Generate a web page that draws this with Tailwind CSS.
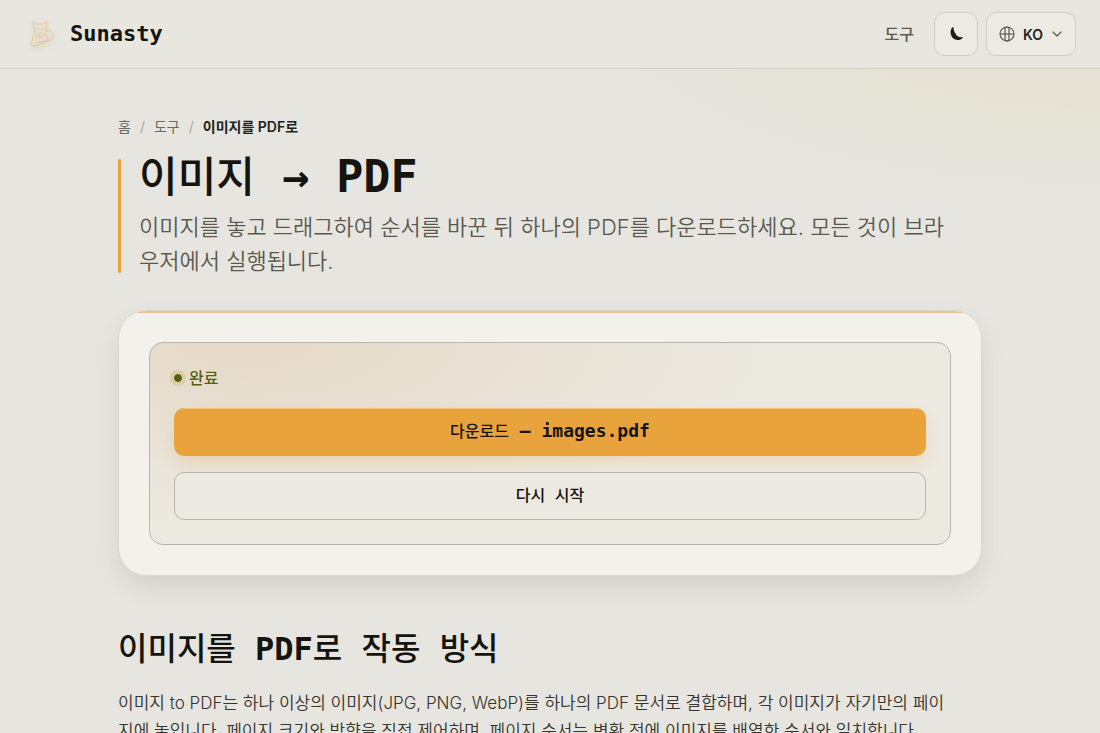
<!DOCTYPE html>
<html lang="ko">
<head>
<meta charset="utf-8">
<meta name="viewport" content="width=device-width, initial-scale=1">
<title>이미지를 PDF로 | Sunasty</title>
<script src="https://cdn.jsdelivr.net/npm/@tailwindcss/browser@4"></script>
</head>
<body class="min-h-screen bg-[#e6e5e0] bg-[radial-gradient(ellipse_560px_210px_at_100%_0,#e6e2d2_0%,#e6e3d6_50%,#e6e5e0_100%)] bg-no-repeat font-['Inter','Noto_Sans_CJK_KR',sans-serif] text-[#15140f]">
<header class="flex h-[69px] items-center justify-between border-b border-[#d0cec5] bg-[#e7e6df] px-6">
  <a href="#" class="flex items-center gap-3">
    <svg class="h-[34px] w-[34px] drop-shadow-md" viewBox="0 0 34 34" fill="none" stroke="#ebc486" stroke-width="1" stroke-linecap="round" stroke-linejoin="round" aria-hidden="true">
      <path d="M10 11 9 4.500l4 2.500h6l4-2.500-1 7.500c0 4-3 6.500-6 6.500s-6-2.500-6-7.500Z"/>
      <path d="M12 11.500l2 .8m6-.8-2 .8M15 15l1 1 1-1"/>
      <path d="M10 17c-2 3-1 5-2 8l-1 3 4 1 12-4M22 17l2 4-1 3-8 1c-2 0-3 1-4 4"/>
      <path d="M23 14c4-1 6 1 6 5s-2 5-6 4M12 19.500c2 2 6 2 8 0"/>
    </svg>
    <span class="font-['DejaVu_Sans_Mono',monospace] text-[22px] font-bold leading-7">Sunasty</span>
  </a>
  <nav class="flex items-center gap-2">
    <a href="#" class="mr-3 text-[16px] font-medium text-[#5b594e]">도구</a>
    <button type="button" aria-label="어두운 테마" class="flex size-11 items-center justify-center rounded-[10px] border border-[#cfcdc5] bg-[#edeae3]">
      <svg class="size-4" viewBox="0 0 16 16" fill="#201f1a" aria-hidden="true"><path d="M4.500 1.200C1.200 4.500 2.200 10.800 6.500 13.200c3 1.500 6.500.8 8.200-1.500.3-.5-.2-.9-.7-.7C9.800 12 5.800 7 5.500 1.700c0-.6-.6-.8-1-.5Z"/></svg>
    </button>
    <button type="button" aria-label="언어" class="flex h-11 items-center gap-2 rounded-[10px] border border-[#cfcdc5] bg-[#edeae3] px-3 text-[14px] font-semibold text-[#24231d]">
      <svg class="size-4" viewBox="0 0 16 16" fill="none" stroke="#5b594e" stroke-width="1.200" aria-hidden="true"><circle cx="8" cy="8" r="7"/><rect x="6" y="1" width="4" height="14" rx="2"/><path d="M1 8h14"/></svg>
      <span>KO</span>
      <svg class="size-3" viewBox="0 0 12 12" fill="none" stroke="#5b594e" stroke-width="1.200" stroke-linecap="round" stroke-linejoin="round" aria-hidden="true"><path d="m2 4 4 4 4-4"/></svg>
    </button>
  </nav>
</header>
<main class="mx-auto max-w-[912px] px-6 pt-[47px]">
  <nav aria-label="이동 경로" class="flex gap-[9px] text-[14px] leading-[22px] text-[#6b695f]">
    <a href="#">홈</a><span class="text-[#aaa89f]">/</span><a href="#">도구</a><span class="text-[#aaa89f]">/</span><span class="font-semibold text-[#201f1a]">이미지를 PDF로</span>
  </nav>
  <div class="relative mt-[15px] pl-[21px]">
    <span class="absolute bottom-[5px] left-0 top-1.5 w-[3px] rounded-sm bg-[#e8a33d]"></span>
    <h1 class="font-['DejaVu_Sans_Mono','Noto_Sans_CJK_KR',monospace] text-[42px] font-medium leading-[50px]">이미지<span class="text-[45px] font-bold leading-none"> → PDF</span></h1>
    <p class="mt-[7px] pr-5 text-[22px] font-[350] leading-[34px] text-[#5b594e]">이미지를 놓고 드래그하여 순서를 바꾼 뒤 하나의 PDF를 다운로드하세요. 모든 것이 브라우저에서 실행됩니다.</p>
  </div>
  <section class="relative mt-8 overflow-clip rounded-[28px] border border-[#d9d7cf] bg-[#f2f1ec] px-[30px] pb-[30px] pt-[31px] shadow-[0_12px_28px_-6px_rgba(90,85,50,0.18)]">
    <span class="absolute inset-x-0 -top-px h-[3px] bg-[#e6c48f]"></span>
    <div class="rounded-[14px] border border-[#b7b5ac] bg-[#ece9e2] bg-[radial-gradient(ellipse_65%_90%_at_12%_0,#e5d9c7,#ece9e1)] p-6">
      <p role="status" class="flex h-[21px] items-center gap-[7px] text-[16px] font-medium text-[#54620f]"><span class="size-2 rounded-full bg-[#54620f] outline-4 outline-[#dccdac]"></span>완료</p>
      <button type="button" class="mt-5 block h-12 w-full rounded-[10px] bg-[#e8a33d] font-['DejaVu_Sans_Mono','Noto_Sans_CJK_KR',monospace] text-[16px] font-medium shadow-[inset_0_2px_0_-1px_#f0c27c,0_8px_18px_-4px_rgba(232,163,61,0.3)]">다운로드<span class="text-[18px] font-bold leading-none"> — images.pdf</span></button>
      <button type="button" class="mt-4 block h-12 w-full rounded-[10px] border border-[#b7b5ac] bg-[#ece9e2] font-['DejaVu_Sans_Mono','Noto_Sans_CJK_KR',monospace] text-[16px] font-medium">다시 시작</button>
    </div>
  </section>
  <section class="mt-[53px]">
    <h2 class="font-['DejaVu_Sans_Mono','Noto_Sans_CJK_KR',monospace] text-[32px] font-medium leading-10">이미지를 <span class="font-bold">PDF</span>로 작동 방식</h2>
    <p class="mt-5 pr-8 text-[17px] font-[350] leading-7 text-[#35342d]">이미지 to PDF는 하나 이상의 이미지(JPG, PNG, WebP)를 하나의 PDF 문서로 결합하며, 각 이미지가 자기만의 페이지에 놓입니다. 페이지 크기와 방향을 직접 제어하며, 페이지 순서는 변환 전에 이미지를 배열한 순서와 일치합니다.</p>
  </section>
</main>
</body>
</html>
